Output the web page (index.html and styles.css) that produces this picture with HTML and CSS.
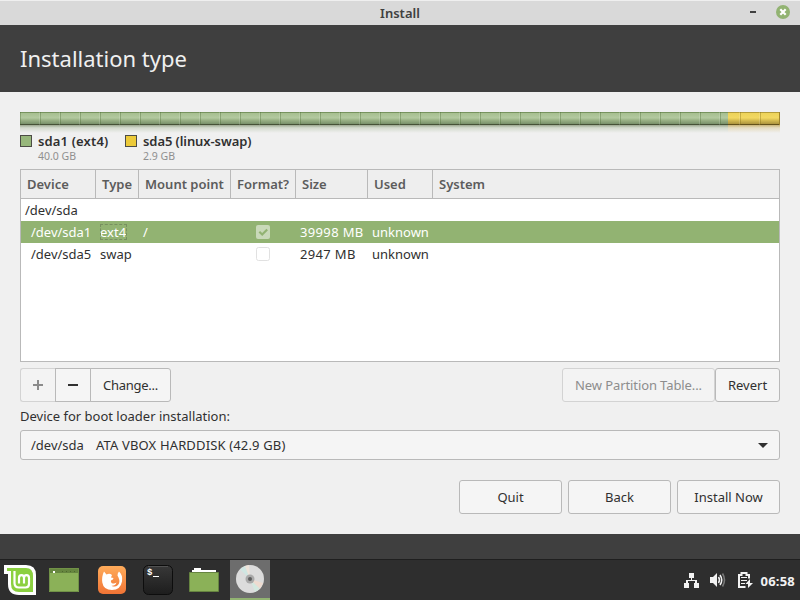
FILE: index.html
```
<!DOCTYPE html>
<html lang="en">
<head>
  <meta charset="utf-8">
  <title>Install</title>
  <link rel="stylesheet" href="styles.css">
</head>
<body>

  <div class="titlebar">
    <span class="title">Install</span>
    <div class="window-buttons">
      <span class="minimize"></span>
      <svg class="close" width="14" height="14" viewBox="0 0 14 14">
        <circle cx="7" cy="7" r="7" fill="#92b372"/>
        <path d="M4.300 4.300l5.400 5.400M9.700 4.300l-5.400 5.400" stroke="#fff" stroke-width="2.200"/>
      </svg>
    </div>
  </div>

  <header>
    <h1>Installation type</h1>
  </header>

  <main>
    <div class="disk-bar">
      <div class="part ext4"></div>
      <div class="part swap"></div>
    </div>
    <div class="disk-shadow">
      <div class="part ext4"></div>
      <div class="part swap"></div>
    </div>

    <div class="legend">
      <div class="legend-item first">
        <span class="swatch green"></span>
        <div>
          <div class="name">sda1 (ext4)</div>
          <div class="size">40.0 GB</div>
        </div>
      </div>
      <div class="legend-item">
        <span class="swatch yellow"></span>
        <div>
          <div class="name wide">sda5 (linux-swap)</div>
          <div class="size">2.9 GB</div>
        </div>
      </div>
    </div>

    <div class="partitions">
      <div class="row head">
        <span>Device</span>
        <span>Type</span>
        <span>Mount point</span>
        <span>Format?</span>
        <span>Size</span>
        <span>Used</span>
        <span>System</span>
      </div>
      <div class="row">
        <span>/dev/sda</span>
      </div>
      <div class="row selected">
        <span class="child">/dev/sda1</span>
        <span><b class="focus">ext4</b></span>
        <span>/</span>
        <span class="check">
          <svg width="14" height="14" viewBox="0 0 14 14">
            <rect width="14" height="14" rx="2" fill="#c9d9b9"/>
            <path d="M3.300 6.800l2.900 2.700 5-5" fill="none" stroke="#92b372" stroke-width="2.200"/>
          </svg>
        </span>
        <span class="num">39998 MB</span>
        <span>unknown</span>
        <span></span>
      </div>
      <div class="row">
        <span class="child">/dev/sda5</span>
        <span>swap</span>
        <span></span>
        <span class="check">
          <svg width="14" height="14" viewBox="0 0 14 14">
            <rect x=".5" y=".5" width="13" height="13" rx="2" fill="#fff" stroke="#e1e1e1"/>
          </svg>
        </span>
        <span class="num">2947 MB</span>
        <span>unknown</span>
        <span></span>
      </div>
    </div>

    <div class="toolbar">
      <div class="group">
        <button class="icon" disabled>
          <svg width="10" height="10" viewBox="0 0 10 10"><path d="M5 0v10M0 5h10" stroke="#8b8b8b" stroke-width="2"/></svg>
        </button>
        <button class="icon">
          <svg width="10" height="10" viewBox="0 0 10 10"><path d="M0 5h10" stroke="#303030" stroke-width="2"/></svg>
        </button>
        <button class="change">Change...</button>
      </div>
      <div class="right">
        <button class="new-table" disabled>New Partition Table...</button>
        <button class="revert">Revert</button>
      </div>
    </div>

    <div class="boot-label">Device for boot loader installation:</div>
    <div class="combo">
      <span class="device">/dev/sda</span>
      <span class="model">ATA VBOX HARDDISK (42.9 GB)</span>
      <svg width="10" height="5" viewBox="0 0 10 5"><path d="M0 0h10L5 5z" fill="#303030"/></svg>
    </div>

    <div class="actions">
      <button>Quit</button>
      <button>Back</button>
      <button>Install Now</button>
    </div>
  </main>

  <div class="desktop"></div>

  <footer>
    <div class="launchers">
      <div class="launcher menu">
        <svg width="32" height="30" viewBox="0 0 32 30">
          <path d="M0 0h22q10 0 10 10v20H15Q4 30 4 19V9H0z" fill="#fff"/>
          <path d="M3 3h19q7 0 7 8v16H15q-8 0-8-8V6H3z" fill="#8bd040"/>
          <path d="M10.500 6v12q0 4.500 4.500 4.500h6.500q3.500 0 3.500-3.500v-6q0-2.800-2.500-2.800T20 13v5.500M20 13q0-2.800-2.500-2.800T15 13v5.500" fill="none" stroke="#fff" stroke-width="2.200"/>
        </svg>
      </div>
      <div class="launcher show-desktop">
        <svg width="30" height="24" viewBox="0 0 30 24">
          <rect width="30" height="24" fill="#8bb158"/>
          <rect width="30" height="5" fill="#66863f"/>
          <path d="M4 3h2v2H4z" fill="#fff"/>
          <path d="M13 3.500h1m3 0h1m3 0h1m3 0h1" stroke="#4d672d"/>
          <path d="M.5.5h29v23H.5z" fill="none" stroke="#719247"/>
        </svg>
      </div>
      <div class="launcher">
        <svg width="28" height="28" viewBox="0 0 28 28">
          <defs>
            <linearGradient id="fox" x2="0" y2="1">
              <stop stop-color="#ffac5b"/>
              <stop offset="1" stop-color="#f17435"/>
            </linearGradient>
          </defs>
          <rect width="28" height="28" rx="5" fill="url(#fox)"/>
          <path d="M6 5.500l2.500 3q2-1 4-.5l1.500 1-1 2.500 2.500.5q0 1.500-2.500 2.500-.5 2.500 2 3 2 .2 3.500-1-1 3.500-5 3.200 3.500 2 6.500-.7 2.500-3 .5-7.500l-1-2q0-2.500 1.500-4Q25 9 24 15.500 22.500 24 14 24 5.500 24 4.300 16.500 3.500 10.500 6 5.500z" fill="#fff"/>
        </svg>
      </div>
      <div class="launcher">
        <svg width="30" height="30" viewBox="0 0 30 30">
          <defs>
            <linearGradient id="term" x2="0" y2="1">
              <stop stop-color="#383838"/>
              <stop offset="1" stop-color="#1d1d1d"/>
            </linearGradient>
          </defs>
          <rect x=".5" y=".5" width="29" height="29" rx="5" fill="url(#term)" stroke="#0d0d0d"/>
          <path d="M5 1.500h20" stroke="#515151"/>
          <text class="prompt" x="4" y="10">$</text>
          <path d="M10 11.500h6" stroke="#fff"/>
        </svg>
      </div>
      <div class="launcher">
        <svg width="30" height="24" viewBox="0 0 30 24">
          <path d="M3 5V2h2V0h7v2h15v3z" fill="#fff"/>
          <path d="M.5 4.500h29v19H.5z" fill="#8bb158" stroke="#668440"/>
        </svg>
      </div>
      <div class="launcher active">
        <svg width="28" height="28" viewBox="0 0 28 28">
          <circle cx="14" cy="14" r="14" fill="#dcdcdc"/>
          <path d="M14 14L4 4.200 9 1z" fill="#d0e6e2"/>
          <path d="M14 14L9 1l4-1z" fill="#eee3d9"/>
          <path d="M14 14l10 9.800-5 3.200z" fill="#d4e8df"/>
          <path d="M14 14l13 4-3 5.800z" fill="#eedbd0"/>
          <circle cx="14" cy="14" r="4.500" fill="#a9a9a9"/>
          <circle cx="14" cy="14" r="2" fill="#5d5d5d"/>
        </svg>
      </div>
    </div>
    <div class="tray">
      <svg class="network" width="15" height="15" viewBox="0 0 15 15" fill="#f2f2f2">
        <path d="M5 0h5v5H8v2h5v3h2v5h-5v-5h1V8H4v2h1v5H0v-5h2V7h5V5H5z"/>
      </svg>
      <svg class="volume" width="16" height="14" viewBox="0 0 16 14">
        <path d="M0 4h3l4-4v14l-4-4H0z" fill="#f2f2f2"/>
        <path d="M8.500 4q2 3 0 6M10 2q3.500 5 0 10" fill="none" stroke="#f2f2f2" stroke-width="1.500"/>
        <path d="M12.500.5q4 6.500 0 13" fill="none" stroke="#777" stroke-width="1.600"/>
      </svg>
      <svg class="battery" width="15" height="16" viewBox="0 0 15 16">
        <path d="M7.500 15H1V3h2.500V1h5v2H11v3.500" fill="none" stroke="#f2f2f2" stroke-width="2"/>
        <path d="M3 5.500h6M3 8.500h6M3 11.500h4" stroke="#f2f2f2"/>
        <path d="M12 7l-4.500 5H10v4l5-5h-3z" fill="#f2f2f2"/>
      </svg>
      <span class="clock">06:58</span>
    </div>
  </footer>

</body>
</html>
```
FILE: styles.css
```
* {
  box-sizing: border-box;
}

body {
  margin: 0;
  width: 800px;
  height: 600px;
  overflow: hidden;
  background-color: #f0f0f0;
  color: #303030;
  font-family: "Noto Sans", "Open Sans", sans-serif;
  font-size: 13px;
  line-height: 22px;
  white-space: nowrap;
}

svg {
  display: block;
}

.titlebar {
  display: grid;
  grid-template-columns: 1fr auto 1fr;
  align-items: center;
  height: 25px;
  border-top: 1px solid #efefef;
  background-color: #d9d9d9;
}

.title {
  grid-column: 2;
  font-weight: 600;
  color: #404040;
}

.window-buttons {
  display: flex;
  justify-content: flex-end;
  align-items: center;
  gap: 20px;
  padding-right: 10px;
}

.close {
  margin-top: -2px;
}

.minimize {
  width: 6px;
  height: 2px;
  margin-top: -2px;
  background-color: #404040;
}

header {
  height: 67px;
  padding: 0 20px;
  background-color: #3f3f3f;
}

h1 {
  margin: 0;
  color: #f0f0f0;
  font-size: 22px;
  font-weight: 400;
  line-height: 67px;
}

main {
  height: 442px;
  padding: 20px 20px 0;
}

.disk-bar,
.disk-shadow {
  display: flex;
  height: 13px;
}

.disk-shadow {
  height: 8px;
}

.part {
  background-size: 100% 100%;
}

.ext4 {
  flex: 1;
}

.swap {
  width: 52px;
}

.disk-bar .ext4 {
  background-image: repeating-linear-gradient(90deg, #48683059 0 1px, transparent 1px 19px, #ffffff26 19px 20px),
    linear-gradient(#78945f 0 1px, #a7bf90 1px, #b3c99f 45%, #9db588 60%, #78906a 12px, #465237 12px);
}

.disk-bar .swap {
  border-right: 1px solid #9e842c;
  background-image: repeating-linear-gradient(90deg, transparent 0 11px, #ffffff26 11px 12px, #80681059 12px 13px, transparent 13px 20px),
    linear-gradient(#b49c3a 0 1px, #edd35a 1px, #f2d862 45%, #dcc253 60%, #ac943e 12px, #64521b 12px);
}

.disk-shadow .ext4 {
  background-image: linear-gradient(#9ba78f, #d3dacd 35%, #f0f0f0);
}

.disk-shadow .swap {
  background-image: linear-gradient(#c9b477, #e5dcc1 35%, #f0f0f0);
}

.legend {
  display: flex;
  height: 36px;
}

.legend-item {
  display: flex;
  gap: 6px;
}

.legend-item.first {
  width: 105px;
}

.swatch {
  width: 12px;
  height: 12px;
  margin-top: 2px;
  border: 1px solid #4c4c45;
}

.green {
  background-color: #97b77b;
}

.yellow {
  background-color: #ecca39;
}

.name {
  height: 15px;
  font-weight: 600;
  letter-spacing: 0.15px;
  line-height: 17px;
}

.name.wide {
  letter-spacing: -0.08px;
}

.size {
  color: #8f8f8f;
  font-size: 10.500px;
  line-height: 16px;
}

.partitions {
  height: 193px;
  border: 1px solid #b9b9b9;
  background-color: #fff;
}

.row {
  display: grid;
  grid-template-columns: 75px 43px 92px 65px 72px 65px 1fr;
  height: 22px;
}

.row span {
  padding-left: 4px;
}

.row .child {
  padding-left: 10px;
}

.row .num {
  letter-spacing: 0.35px;
}

.row .check {
  padding: 4px 0 0 25px;
}

.head {
  height: 29px;
  border-bottom: 1px solid #b9b9b9;
  background-color: #eee;
  color: #5c5c5c;
  font-weight: 600;
  line-height: 28px;
}

.head span {
  padding-left: 6px;
  border-right: 1px solid #b9b9b9;
}

.head span:last-child {
  border-right: 0;
}

.selected {
  background-color: #92b372;
  color: #fff;
}

.focus {
  display: inline-block;
  width: 27px;
  height: 16px;
  font-weight: 400;
  line-height: 16px;
  outline: 1px dashed #789060;
  outline-offset: -1px;
}

.toolbar {
  display: flex;
  justify-content: space-between;
  margin-top: 6px;
}

.group,
.right {
  display: flex;
}

button {
  display: flex;
  align-items: center;
  justify-content: center;
  height: 34px;
  padding: 0;
  border: 1px solid #b9b9b9;
  border-radius: 3px;
  background-color: #f5f5f5;
  color: #303030;
  font: inherit;
}

button:disabled {
  border-color: #d3d3d3;
  background-color: #f3f3f3;
  color: #8d8d8d;
}

.group button {
  border-radius: 0;
}

.group .icon {
  width: 36px;
}

.group .icon:first-child {
  width: 35px;
  border-right: 0;
  border-radius: 3px 0 0 3px;
}

.group .change {
  width: 81px;
  margin-left: -1px;
  border-radius: 0 3px 3px 0;
  letter-spacing: -0.25px;
}

.new-table {
  width: 153px;
  letter-spacing: -0.1px;
}

.revert {
  width: 65px;
}

.boot-label {
  height: 28px;
  line-height: 28px;
}

.combo {
  display: flex;
  align-items: center;
  height: 30px;
  padding: 0 11px 0 10px;
  border: 1px solid #b9b9b9;
  border-radius: 3px;
  background-color: #f5f5f5;
}

.device {
  width: 65px;
}

.model {
  letter-spacing: 0.15px;
}

.combo svg {
  margin-left: auto;
}

.actions {
  display: flex;
  justify-content: flex-end;
  gap: 6px;
  margin-top: 20px;
}

.actions button {
  width: 103px;
}

.desktop {
  height: 25px;
  background-color: #3f3f3f;
}

footer {
  display: flex;
  justify-content: space-between;
  height: 41px;
  border-top: 1px solid #1f1f1f;
  background-color: #2e2e2e;
}

.launchers {
  display: flex;
  gap: 6px;
}

.launcher {
  display: flex;
  align-items: center;
  justify-content: center;
  width: 40px;
  height: 40px;
}

.launcher.menu {
  width: 38px;
  padding-left: 2px;
}

.show-desktop {
  margin-right: 2px;
}

.active {
  border-bottom: 2px solid #92b372;
  background-color: #6d6d6d;
}

.prompt {
  fill: #fff;
  font: bold 9px "Liberation Mono", monospace;
}

.tray {
  display: flex;
  align-items: center;
  padding-right: 5px;
}

.volume {
  margin-left: 11px;
}

.battery {
  margin-left: 12px;
}

.clock {
  margin-left: 8px;
  padding-top: 2px;
  color: #f2f2f2;
  font-weight: 700;
  letter-spacing: 0.2px;
}
```
